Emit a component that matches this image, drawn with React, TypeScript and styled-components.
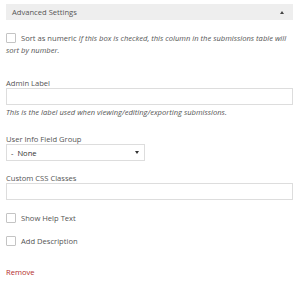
import React from "react";
import styled, { createGlobalStyle } from "styled-components";

const Global = createGlobalStyle`
  body {
    margin: 0;
    background: #fff;
    font-family: "Open Sans", "Liberation Sans", sans-serif;
    color: #555;
  }
`;

const Panel = styled.div`
  width: 287px;
  padding: 4px 7px 0 6px;
  font-size: 7.6px;
`;

const Header = styled.div`
  height: 16px;
  background: #eeeeee;
  display: flex;
  align-items: center;
  justify-content: space-between;
  padding: 0 9px 0 6px;
  color: #555;
`;

const Arrow = styled.span`
  width: 0;
  height: 0;
  border-left: 2.5px solid transparent;
  border-right: 2.5px solid transparent;
  border-bottom: 3px solid #444;
`;

const CheckRow = styled.div<{ top: number }>`
  margin-top: ${p => p.top}px;
  line-height: 12px;
  color: #555;
`;

const Box = styled.span`
  display: inline-block;
  width: 8px;
  height: 8px;
  border: 1px solid #c4c4c4;
  border-radius: 1px;
  vertical-align: middle;
  margin: -2px 5px 0 0;
`;

const Note = styled.em`
  color: #555;
`;

const Label = styled.div<{ top: number }>`
  margin-top: ${p => p.top}px;
  line-height: 10px;
  color: #555;
`;

const TextInput = styled.div`
  height: 15px;
  border: 1px solid #dddddd;
  background: #fff;
`;

const Help = styled.div`
  margin-top: 1px;
  line-height: 12px;
  font-style: italic;
  color: #555;
`;

const Select = styled.div`
  width: 128px;
  height: 15px;
  border: 1px solid #dddddd;
  display: flex;
  align-items: center;
  justify-content: space-between;
  padding: 0 5px 0 4px;
  color: #333;
`;

const Caret = styled.span`
  width: 0;
  height: 0;
  border-left: 2px solid transparent;
  border-right: 2px solid transparent;
  border-top: 3px solid #333;
`;

const Remove = styled.div`
  margin-top: 19px;
  line-height: 12px;
  color: #b32d2e;
`;

export default function App() {
  return (
    <Panel>
      <Global />
      <Header>
        <span>Advanced Settings</span>
        <Arrow />
      </Header>
      <CheckRow top={12}>
        <Box />
        Sort as numeric{" "}
        <Note>If this box is checked, this column in the submissions table will sort by number.</Note>
      </CheckRow>

      <Label top={22}>Admin Label</Label>
      <TextInput />
      <Help>This is the label used when viewing/editing/exporting submissions.</Help>

      <Label top={16}>User Info Field Group</Label>
      <Select>
        <span>-&nbsp; None</span>
        <Caret />
      </Select>

      <Label top={12}>Custom CSS Classes</Label>
      <TextInput />

      <CheckRow top={12}>
        <Box />
        Show Help Text
      </CheckRow>
      <CheckRow top={11}>
        <Box />
        Add Description
      </CheckRow>

      <Remove>Remove</Remove>
    </Panel>
  );
}
